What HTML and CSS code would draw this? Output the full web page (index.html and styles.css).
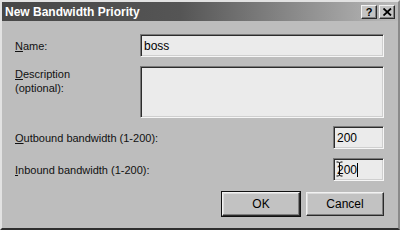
FILE: index.html
```html
<!DOCTYPE html>
<html lang="en">
<head>
  <meta charset="UTF-8" />
  <title>New Bandwidth Priority</title>
  <link rel="stylesheet" href="styles.css">
</head>
<body>
  <div class="window">
    <div class="titlebar">
      <span class="title">New Bandwidth Priority</span>
      <div class="caption-buttons">
        <span class="cap-btn">?</span>
        <span class="cap-btn">
          <svg width="9" height="8" viewBox="0 0 9 8"><path d="M0.5 0.5 L8 7.5 M8 0.5 L0.5 7.5" stroke="#000" stroke-width="1.8"/></svg>
        </span>
      </div>
    </div>

    <div class="content">
      <div class="row">
        <label class="label"><u>N</u>ame:</label>
        <div class="field wide">boss</div>
      </div>

      <div class="row top">
        <label class="label"><u>D</u>escription<br>(optional):</label>
        <div class="field wide area"></div>
      </div>

      <div class="row">
        <label class="label grow"><u>O</u>utbound bandwidth (1-200):</label>
        <div class="field small">200</div>
      </div>

      <div class="row">
        <label class="label grow"><u>I</u>nbound bandwidth (1-200):</label>
        <div class="field small cursor-host">200<span class="caret"></span>
          <svg class="ibeam" width="7" height="16" viewBox="0 0 7 16"><path d="M0.5 1 H2.5 L3.5 2 L4.5 1 H6.5 M3.5 2 V14 M0.5 15 H2.5 L3.5 14 L4.5 15 H6.5" stroke="#000" fill="none" stroke-width="1"/></svg>
        </div>
      </div>

      <div class="buttons">
        <button class="btn default">OK</button>
        <button class="btn">Cancel</button>
      </div>
    </div>
  </div>
</body>
</html>
```

FILE: styles.css
```css
body {
  margin: 0;
  padding: 0;
  background: #bdbdbd;
  font-family: "Liberation Sans", Arial, sans-serif;
  font-size: 11px;
  color: #111;
}
.window {
  width: 400px;
  height: 230px;
  box-sizing: border-box;
  background: #bdbdbd;
  border: 2px solid;
  border-color: #e2e2e2 #8a8a8a #2e2e2e #e2e2e2;
}
.titlebar {
  height: 19px;
  display: flex;
  align-items: center;
  justify-content: space-between;
  padding: 0 3px 0 3px;
  background: linear-gradient(to right, #474747 0%, #555 45%, #bababa 100%);
}
.title {
  color: #fff;
  font-weight: bold;
  font-size: 12px;
}
.caption-buttons {
  display: flex;
  gap: 2px;
}
.cap-btn {
  width: 16px;
  height: 14px;
  box-sizing: border-box;
  display: flex;
  align-items: center;
  justify-content: center;
  background: #c4c4c4;
  border: 1px solid;
  border-color: #f2f2f2 #2a2a2a #2a2a2a #f2f2f2;
  box-shadow: inset -1px -1px #808080;
  font-weight: bold;
  font-size: 11px;
  color: #000;
}
.content {
  padding: 13px 14px 0 13px;
  display: flex;
  flex-direction: column;
}
.row {
  display: flex;
  align-items: center;
  margin-bottom: 9px;
}
.row.top {
  align-items: flex-start;
  margin-bottom: 8px;
}
.row.top .label {
  padding-top: 1px;
  line-height: 14px;
}
.label {
  width: 125px;
  flex: none;
}
.label.grow {
  flex: 1;
  width: auto;
}
.field {
  box-sizing: border-box;
  height: 23px;
  background: #ebebeb;
  border: 1px solid;
  border-color: #7a7a7a #f6f6f6 #f6f6f6 #7a7a7a;
  box-shadow: inset 1px 1px #2c2c2c, inset -1px -1px #cfcfcf;
  padding: 4px 3px 0 3px;
  font-size: 12px;
  color: #000;
}
.field.wide {
  width: 244px;
}
.field.area {
  height: 52px;
}
.field.small {
  width: 51px;
}
.cursor-host {
  position: relative;
}
.caret {
  display: inline-block;
  width: 1px;
  height: 14px;
  background: #000;
  vertical-align: -3px;
}
.ibeam {
  position: absolute;
  left: 2px;
  top: 2px;
}
.buttons {
  display: flex;
  justify-content: flex-end;
  gap: 6px;
  margin-top: 2px;
}
.btn {
  width: 78px;
  height: 24px;
  box-sizing: border-box;
  background: #c2c2c2;
  border: 1px solid;
  border-color: #f2f2f2 #2a2a2a #2a2a2a #f2f2f2;
  box-shadow: inset -1px -1px #7e7e7e, inset 1px 1px #dcdcdc;
  font-family: "Liberation Sans", Arial, sans-serif;
  font-size: 12px;
  color: #000;
  padding: 0;
}
.btn.default {
  outline: 1px solid #111;
  outline-offset: 0;
  border-color: #f2f2f2 #2a2a2a #2a2a2a #f2f2f2;
}
```
